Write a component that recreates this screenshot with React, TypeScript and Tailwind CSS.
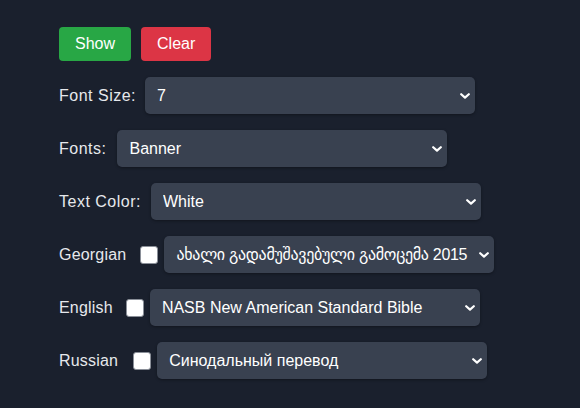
import React from "react";

function Chevron() {
  return (
    <svg
      className="pointer-events-none absolute right-[5px] top-1/2 -translate-y-1/2"
      width="10"
      height="6"
      viewBox="0 0 10 6"
      fill="none"
    >
      <path d="M1.2 1.2 L5 4.6 L8.8 1.2" stroke="#ffffff" strokeWidth="2.2" strokeLinecap="round" strokeLinejoin="round" />
    </svg>
  );
}

function Select({ value, options, tight }: { value: string; options: string[]; tight?: boolean }) {
  return (
    <div className="relative w-[330px] h-[37px] shrink-0">
      <select
        defaultValue={value}
        className={
          tight
            ? "appearance-none w-full h-full rounded-[5px] bg-[#394150] text-white text-[16px] pl-[12px] pr-[24px] outline-none shadow-[0_1px_3px_rgba(0,0,0,0.35)] overflow-hidden tracking-[-0.3px]"
            : "appearance-none w-full h-full rounded-[5px] bg-[#394150] text-white text-[16px] pl-[12px] pr-[26px] outline-none shadow-[0_1px_3px_rgba(0,0,0,0.35)] overflow-hidden"
        }
        style={{ fontFamily: '"Liberation Sans", "DejaVu Sans", Arial, sans-serif' }}
      >
        {options.map((o) => (
          <option key={o} value={o}>
            {o}
          </option>
        ))}
      </select>
      <Chevron />
    </div>
  );
}

function Checkbox() {
  return (
    <input
      type="checkbox"
      className="appearance-none w-[18px] h-[18px] rounded-[3px] bg-white border border-[#8a8f98] shrink-0"
    />
  );
}

export default function App() {
  const label = "text-[16px] text-[#e6e8ec]";
  return (
    <div
      className="w-[580px] h-[408px] bg-[#1a202d] pl-[59px] pt-[27px]"
      style={{ fontFamily: '"Liberation Sans", Arial, sans-serif' }}
    >
      <div className="flex gap-[10px]">
        <button className="h-[34px] px-[16px] rounded-[4px] bg-[#28a745] text-white text-[16px]">Show</button>
        <button className="h-[34px] px-[16px] rounded-[4px] bg-[#dc3545] text-white text-[16px]">Clear</button>
      </div>

      <div className="flex items-center mt-[16px]">
        <span className={`${label} tracking-[0.5px] mr-[9px]`}>Font Size:</span>
        <Select value="7" options={["1", "2", "3", "4", "5", "6", "7"]} />
      </div>

      <div className="flex items-center mt-[16px]">
        <span className={`${label} tracking-[0.5px] mr-[11px]`}>Fonts:</span>
        <Select value="Banner" options={["Banner", "Standard"]} />
      </div>

      <div className="flex items-center mt-[16px]">
        <span className={`${label} tracking-[0.5px] mr-[10px]`}>Text Color:</span>
        <Select value="White" options={["White", "Yellow"]} />
      </div>

      <div className="flex items-center mt-[16px]">
        <span className={`${label} tracking-[0.2px] mr-[14px]`}>Georgian</span>
        <Checkbox />
        <div className="ml-[6px]">
          <Select tight value="ახალი გადამუშავებული გამოცემა 2015" options={["ახალი გადამუშავებული გამოცემა 2015"]} />
        </div>
      </div>

      <div className="flex items-center mt-[16px]">
        <span className={`${label} tracking-[0.2px] mr-[13px]`}>English</span>
        <Checkbox />
        <div className="ml-[6px]">
          <Select value="NASB New American Standard Bible" options={["NASB New American Standard Bible"]} />
        </div>
      </div>

      <div className="flex items-center mt-[16px]">
        <span className={`${label} tracking-[0.2px] mr-[15px]`}>Russian</span>
        <Checkbox />
        <div className="ml-[6px]">
          <Select value="Синодальный перевод" options={["Синодальный перевод"]} />
        </div>
      </div>
    </div>
  );
}
